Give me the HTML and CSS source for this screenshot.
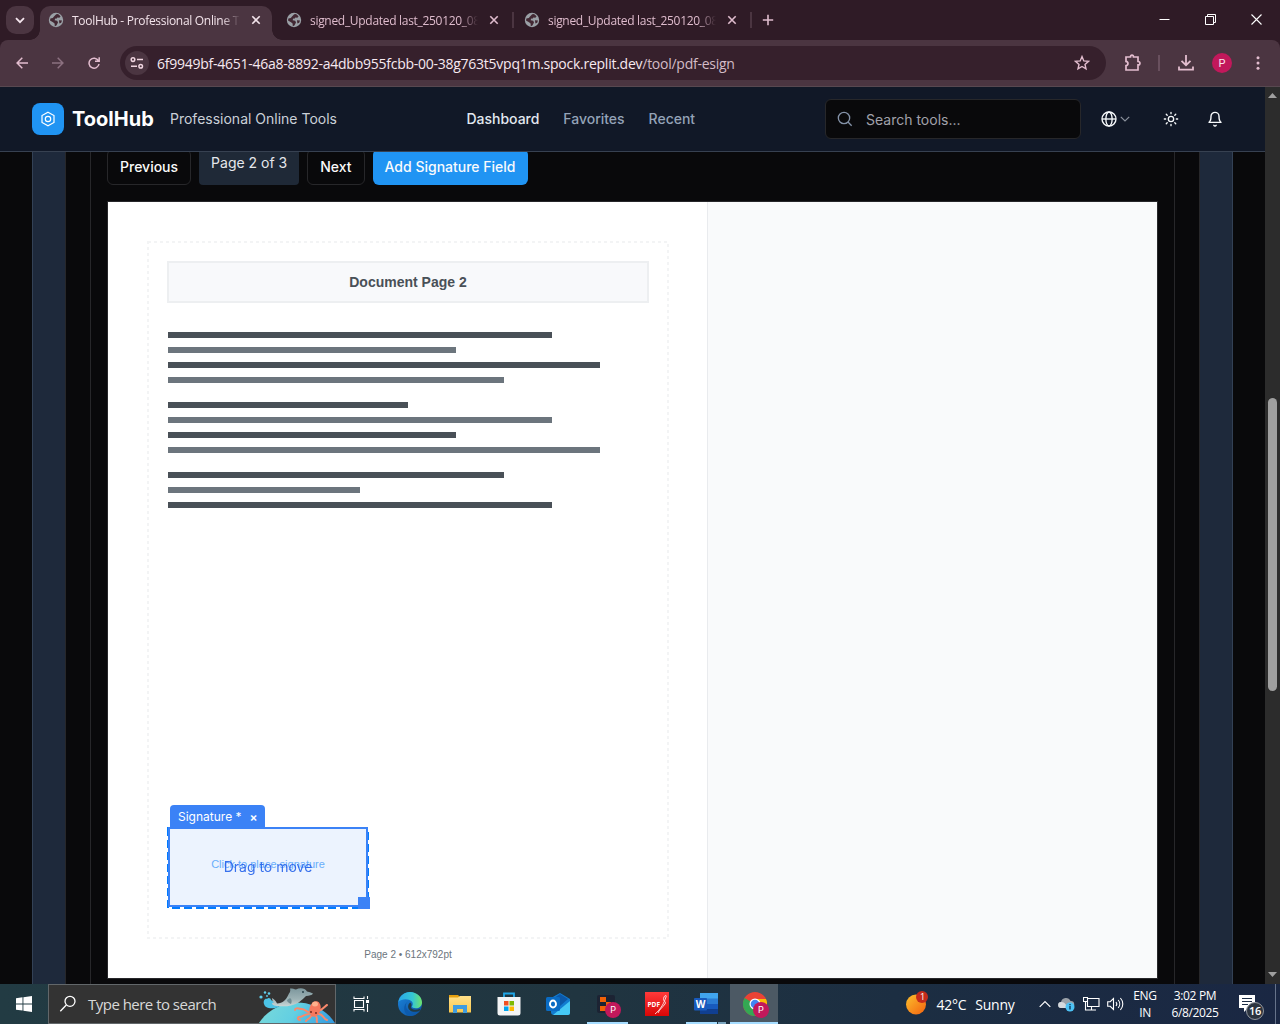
FILE: index.html
```html
<!DOCTYPE html>
<html lang="en">
<head>
<meta charset="utf-8">
<title>ToolHub - Professional Online Tools</title>
<link rel="stylesheet" href="styles.css">
</head>
<body>
<svg width="0" height="0" class="defs">
  <defs>
    <symbol id="globe" viewBox="0 0 16 16"><circle cx="8" cy="8" r="7.2" fill="#9aa0a6"/><path d="M8.2 2.2 10 2l2.6 2.2-1.2 1.6-2-.2-1 1.2-1.2-.4-.6 1.8 2.6.6.8 1.6-1.6 3.2-1.6.6-.2-2.6-1.6-1.4L2 8.600l.4-2 2.400-.6L6 4.400z" fill="#422833"/><path d="M11 8.200l3 .2-.8 2.400-1.800.8z" fill="#422833"/></symbol>
    <symbol id="x" viewBox="0 0 10 10"><path d="M1.300 1.300l7.400 7.400M8.700 1.300L1.300 8.700" stroke="currentColor" stroke-width="1.600"/></symbol>
    <linearGradient id="sea" x1="0" x2="1" y1="0" y2=".6"><stop offset="0" stop-color="#7fdcd8"/><stop offset=".4" stop-color="#62cfe2"/><stop offset="1" stop-color="#1478e0"/></linearGradient>
    <linearGradient id="skin" x1="0" x2="0" y1="0" y2="1"><stop offset="0" stop-color="#7d979d"/><stop offset=".6" stop-color="#9db2b5"/><stop offset="1" stop-color="#c9d6d6"/></linearGradient>
    <linearGradient id="edgeA" x1="0" x2="1"><stop offset="0" stop-color="#2aa6e8"/><stop offset=".6" stop-color="#35c6d4"/><stop offset="1" stop-color="#6fe36a"/></linearGradient>
    <linearGradient id="edgeB" x1="0" x2="1" y1="0" y2="1"><stop offset="0" stop-color="#1b86dc"/><stop offset="1" stop-color="#0c4fa0"/></linearGradient>
    <linearGradient id="sun" x1="0" x2="1" y1="0" y2="1"><stop offset="0" stop-color="#fbc02d"/><stop offset="1" stop-color="#f4620f"/></linearGradient>
    <linearGradient id="folder" x1="0" x2="0" y1="0" y2="1"><stop offset="0" stop-color="#ffe08a"/><stop offset="1" stop-color="#fbc94d"/></linearGradient>
    <linearGradient id="red" x1="0" x2="0" y1="0" y2="1"><stop offset="0" stop-color="#ff3a3a"/><stop offset="1" stop-color="#d80606"/></linearGradient>
  </defs>
</svg>
<div class="screen">
  <div class="tabstrip">
    <button class="tab-search"><svg width="10" height="7" viewBox="0 0 10 7"><path d="M1 1.200l4 4 4-4" fill="none" stroke="currentColor" stroke-width="1.800"/></svg></button>
    <div class="tab active"><svg class="fav"><use href="#globe"/></svg><span class="title">ToolHub - Professional Online Tools</span><svg class="close"><use href="#x"/></svg></div>
    <div class="tab second"><svg class="fav"><use href="#globe"/></svg><span class="title">signed_Updated last_250120_08</span><svg class="close"><use href="#x"/></svg></div>
    <div class="tab third"><svg class="fav"><use href="#globe"/></svg><span class="title">signed_Updated last_250120_08</span><svg class="close"><use href="#x"/></svg></div>
    <svg class="newtab" width="12" height="12" viewBox="0 0 12 12"><path d="M6 .8v10.400M.8 6h10.400" stroke="currentColor" stroke-width="1.600"/></svg>
    <div class="window-buttons">
      <svg width="11" height="11" viewBox="0 0 11 11"><path d="M.5 5.500h10" stroke="#fff"/></svg>
      <svg width="11" height="11" viewBox="0 0 11 11"><path d="M.5 2.500h8v8h-8zM2.500 2.500v-2h8v8h-2" fill="none" stroke="#fff"/></svg>
      <svg width="11" height="11" viewBox="0 0 11 11"><path d="M.5.5l10 10M10.500.5l-10 10" stroke="#fff" stroke-width="1.100"/></svg>
    </div>
  </div>
  <div class="toolbar">
    <div class="history">
      <svg width="12" height="12" viewBox="0 0 12 12"><path d="M12 6H1.500M6.300.8L1.100 6l5.200 5.200" fill="none" stroke="#e3bdcf" stroke-width="1.500"/></svg>
      <svg width="12" height="12" viewBox="0 0 12 12"><path d="M0 6h10.500M5.700.8L10.900 6l-5.200 5.200" fill="none" stroke="#8c7180" stroke-width="1.500"/></svg>
      <svg width="12" height="12" viewBox="0 0 12 12"><path d="M10.400 3.700A5 5 0 1 0 11 7M11.200.3v4H7" fill="none" stroke="#e3bdcf" stroke-width="1.500"/></svg>
    </div>
    <div class="omnibox">
      <span class="site"><svg width="14" height="12" viewBox="0 0 14 12"><g fill="none" stroke="#f0d5e0" stroke-width="1.500"><circle cx="3" cy="2.600" r="1.800"/><path d="M7 2.600h6M1 9.200h6"/><circle cx="10.700" cy="9.200" r="1.800"/></g></svg></span>
      <span class="url">6f9949bf-4651-46a8-8892-a4dbb955fcbb-00-38g763t5vpq1m.spock.replit.dev<i>/tool/pdf-esign</i></span>
      <svg class="star" width="16" height="16" viewBox="0 0 16 16"><path d="M8 1.600l1.800 4.300 4.700.4L11 9.400l1 4.500-4-2.400-4 2.400 1-4.500L1.500 6.300l4.700-.4z" fill="none" stroke="#e3bdcf" stroke-width="1.400"/></svg>
    </div>
    <svg class="puzzle" width="18" height="18" viewBox="0 0 18 18"><path d="M2 3h4.500c0-2.400 3-2.400 3 0H14v4.500c2.600 0 2.600 3.400 0 3.400V16H2v-4.300c2.600-.3 2.600-4 0-4.300z" fill="none" stroke="#e3bdcf" stroke-width="1.700"/></svg>
    <span class="bar-sep"></span>
    <svg class="download" width="16" height="16" viewBox="0 0 16 16"><path d="M8 0v9.500M3.500 5.800L8 10.200l4.500-4.400M1 11.500v3.200h14v-3.200" fill="none" stroke="#e3bdcf" stroke-width="1.800"/></svg>
    <span class="avatar">P</span>
    <svg class="dots" width="4" height="14" viewBox="0 0 4 14" fill="#e3bdcf"><circle cx="2" cy="1.700" r="1.500"/><circle cx="2" cy="7" r="1.500"/><circle cx="2" cy="12.300" r="1.500"/></svg>
  </div>

  <div class="viewport">
    <div class="page">
      <header class="header">
        <span class="logo"><svg width="16" height="16" viewBox="0 0 16 16" fill="none" stroke="#fff" stroke-width="1.200"><path d="M8 1.200l6 3.400v6.800l-6 3.400-6-3.400V4.600z"/><circle cx="8" cy="8" r="2.700"/></svg></span>
        <span class="brand">ToolHub</span>
        <span class="tagline">Professional Online Tools</span>
        <nav class="nav"><a class="current">Dashboard</a><a>Favorites</a><a>Recent</a></nav>
        <div class="search"><svg width="16" height="16" viewBox="0 0 24 24" fill="none" stroke="#8492a8" stroke-width="2"><circle cx="10.500" cy="10.500" r="8.500"/><path d="M22 22l-5.500-5.500"/></svg><span>Search tools...</span></div>
        <div class="lang"><svg width="16" height="16" viewBox="0 0 24 24" fill="none" stroke="#f8fafc" stroke-width="2"><circle cx="12" cy="12" r="10.500"/><ellipse cx="12" cy="12" rx="4.700" ry="10.500"/><path d="M1.500 12h21"/></svg><svg width="12" height="12" viewBox="0 0 12 12"><path d="M1.800 3.800L6 8l4.200-4.200" fill="none" stroke="#8b919c" stroke-width="1.200"/></svg></div>
        <svg class="theme" width="16" height="16" viewBox="0 0 24 24" fill="none" stroke="#f8fafc" stroke-width="2" stroke-linecap="round"><circle cx="12" cy="12" r="4"/><path d="M12 2v2M12 20v2M4.900 4.900l1.400 1.400M17.700 17.700l1.400 1.400M2 12h2M20 12h2M6.300 17.700l-1.400 1.400M19.100 4.900l-1.400 1.400"/></svg>
        <svg class="bell" width="16" height="16" viewBox="0 0 24 24" fill="none" stroke="#f8fafc" stroke-width="2.100" stroke-linecap="round" stroke-linejoin="round"><path d="M6 8a6 6 0 0 1 12 0c0 7 3 9 3 9H3s3-2 3-9M10.300 21.500a2 2 0 0 0 3.400 0"/></svg>
      </header>
      <main class="content">
        <div class="outer"><div class="card"><div class="panel">
          <div class="controls"><button class="btn">Previous</button><span class="count">Page 2 of 3</span><button class="btn">Next</button><button class="btn primary">Add Signature Field</button></div>
          <div class="viewer">
            <div class="sheet">
              <svg class="frame" width="600" height="776"><rect x="40" y="40" width="520" height="696" fill="none" stroke="#f3f4f5" stroke-width="2" stroke-dasharray="3 3"/><rect x="60" y="626" width="200" height="80" fill="none" stroke="#007bff" stroke-width="2" stroke-dasharray="8 4"/></svg>
              <div class="sheet-title">Document Page 2</div>
              <div class="lines"><b class="w80"></b><b class="w60"></b><b class="w90"></b><b class="w70"></b></div>
              <div class="lines"><b class="w50"></b><b class="w80"></b><b class="w60"></b><b class="w90"></b></div>
              <div class="lines"><b class="w70"></b><b class="w40"></b><b class="w80"></b></div>
              <div class="sheet-foot">Page 2 • 612x792pt</div>
              <div class="field">
                <div class="hint">Click to place signature</div>
                <div class="drag">Drag to move</div>
                <div class="tag">Signature * <span>×</span></div>
                <div class="handle"></div>
              </div>
            </div>
          </div>
        </div></div></div>
      </main>
    </div>
    <div class="scrollbar">
      <svg width="9" height="5" viewBox="0 0 9 5"><path d="M0 5L4.500 0 9 5z" fill="#9f9f9f"/></svg>
      <span class="thumb"></span>
      <svg width="9" height="5" viewBox="0 0 9 5"><path d="M0 0l4.500 5L9 0z" fill="#9f9f9f"/></svg>
    </div>
  </div>

  <div class="taskbar">
    <div class="start"><svg width="16" height="16" viewBox="0 0 16 16" fill="#fff"><path d="M0 2.200L6.500 1.300v6.200H0zM7.400 1.200L16 0v7.500H7.400zM0 8.400h6.500v6.200L0 13.700zM7.400 8.400H16V16l-8.600-1.200z"/></svg></div>
    <div class="find">
      <svg class="lens" width="18" height="18" viewBox="0 0 18 18" fill="none" stroke="#fff" stroke-width="1.300"><circle cx="11" cy="6.300" r="5"/><path d="M7.300 10L1.300 16.300"/></svg>
      <span>Type here to search</span>
      <svg class="art" width="80" height="38" viewBox="0 0 80 38">
        <circle cx="42" cy="63" r="45.500" fill="url(#sea)"/>
        <path d="M20 23c-5 1-10 0-11-4-1-3 1-6 3-5 1-2 4-1 4 1l5 3 3 4z" fill="#4cc3e6"/><circle cx="6" cy="12" r="1.600" fill="#5fd0ee"/><circle cx="10" cy="7.500" r="1.200" fill="#5fd0ee"/><circle cx="14" cy="8.500" r="1.300" fill="#5fd0ee"/><circle cx="12" cy="11" r=".9" fill="#5fd0ee"/>
        <path d="M17 13c2 1 4 3 5 5.500 6 0 9-4 11-8 1-2.500 3-3.500 2-7 3 0 4 .5 6 1 4-2 9-1.500 11 2 2 .2 4 1 6 2-1 2-4 2-7 2.500-4 4-8 8-15 9.500-4 1-9 1-14 .5-2 0-4-1-5-2 0-2 2-1 2-1-1-1-2-3-2-5z" fill="url(#skin)"/><path d="M35 13c2 1 2 4 1 6-3-1-4-3-4-4z" fill="#6f8b92"/><circle cx="48" cy="7" r=".9" fill="#203a44"/>
        <g fill="none" stroke="#f9896c" stroke-width="2" stroke-linecap="round"><path d="M54 27c-4 0-4-4-8-3-4-1-6-1-6 1M54 29c-5 0-6 3-10 3-2 1-1 3 1 3M56 31c-1 3-4 3-5 5M61 31c2 3 0 4 1 6M63 29c5-1 5 5 9 6M63 26c5-1 7-5 9-6"/></g><ellipse cx="60" cy="24" rx="5.500" ry="8" fill="#f6795e" transform="rotate(15 60 24)"/><ellipse cx="60" cy="19" rx="3" ry="2.500" fill="#ffb08c"/><circle cx="56" cy="27" r=".9" fill="#6b241c"/><circle cx="61" cy="28" r=".9" fill="#6b241c"/>
      </svg>
    </div>
    <div class="app"><svg width="17" height="16" viewBox="0 0 17 16" fill="none" stroke="#fff" stroke-width="1.100"><path d="M1.500 4.500h9v7h-9zM1 .5V2.500h10V.5M1 15.500v-2h10v2M14.500 0v3M14.500 8v8"/><path d="M13.500 4.500h2v2h-2z" fill="#fff"/></svg></div>
    <div class="app"><svg width="24" height="24" viewBox="0 0 24 24"><circle cx="12" cy="12" r="12" fill="url(#edgeB)"/><path d="M.3 10C1.500 3.800 6.500 0 12 0c7 0 12 5.200 12 10.300 0 4-3 6-6 6-2.700 0-4.300-1-4-2 .9-1.100 1.300-3.300-.4-5C11 6.500 3.500 6.200.3 10z" fill="url(#edgeA)"/><path d="M10 9.200c-4 3-2 9.500 3.500 11 3 .8 6-.1 8.300-1.700C19 22.500 15 24 11.500 24 5.500 22 4 13 10 9.200z" fill="#0d5bad"/><path d="M13 14.500c-.8 2.500 4 4.500 9.300 2.200l-.5 1.700c-5 3.400-13 .6-11.500-5.200.3-1.200 1-2.200 2-2.800 1.200 1.200 1.700 2.900.7 4.100z" fill="#203b46"/></svg></div>
    <div class="app"><svg width="24" height="24" viewBox="0 0 24 24"><path d="M1 3h9l2 2v4H1z" fill="#e5a010"/><path d="M1 5.500h9L12 4h11v16.500H1z" fill="url(#folder)"/><path d="M5 13h14v8h-4v-4H9v4H5z" fill="#3f9ce0"/></svg></div>
    <div class="app"><svg width="24" height="24" viewBox="0 0 24 24"><path d="M7 6V1.500h10V6" fill="none" stroke="#20a7e8" stroke-width="1.800"/><path d="M.5 5h23v16a2.500 2.500 0 0 1-2.500 2.500H3A2.500 2.500 0 0 1 .5 21z" fill="#f3f4f5"/><path d="M7 9h4.500v4.500H7z" fill="#f25022"/><path d="M12.500 9H17v4.500h-4.500z" fill="#7fba00"/><path d="M7 14.500h4.500V19H7z" fill="#00a4ef"/><path d="M12.500 14.500H17V19h-4.500z" fill="#ffb900"/></svg></div>
    <div class="app"><svg width="24" height="24" viewBox="0 0 24 24"><path d="M5 6l9-5 10 6v13a3 3 0 0 1-3 3H8a3 3 0 0 1-3-3z" fill="#127bd0"/><path d="M8 6l6-4 8 5-8 7z" fill="#0c58a8"/><path d="M24 9v12a2 2 0 0 1-2 2H7z" fill="#45c8f5"/><rect y="5" width="14" height="14" rx="1.500" fill="#0a6cc4"/><ellipse cx="7" cy="12" rx="3" ry="3.500" fill="none" stroke="#fff" stroke-width="1.900"/></svg></div>
    <div class="app open"><svg width="24" height="24" viewBox="0 0 24 24"><rect x="1" y="3" width="18" height="18" rx="2" fill="#1c2333"/><path d="M4 5h6v5H4zM10 10h5v5h-5zM4 14h6v5H4z" fill="#f26207"/></svg><em>P</em></div>
    <div class="app"><svg width="24" height="24" viewBox="0 0 24 24"><path d="M0 0h24v24H0z" fill="url(#red)"/><text x="2.500" y="14.500" class="pdf">PDF</text><path d="M10 22c6-5 9-11 11-17 1-2-1-2-2 0-2 5 3 4 1 7-3 4-6 6-7 9" fill="none" stroke="#fff" stroke-width=".8"/></svg></div>
    <div class="app open multi"><svg width="24" height="24" viewBox="0 0 24 24"><path d="M6 1h18v6H6z" fill="#41a5ee"/><path d="M6 6.500h18V12H6z" fill="#2b7cd3"/><path d="M6 12h18v5.500H6z" fill="#185abd"/><path d="M6 17h18v5H6z" fill="#103f91"/><rect y="6" width="13" height="12.500" rx="1" fill="#185abd"/><text x="6.500" y="16" class="word">W</text></svg></div>
    <div class="app active open"><svg width="24" height="24" viewBox="0 0 24 24"><circle cx="12" cy="12" r="12" fill="#ea4335"/><path d="M12 12L1.600 6A12 12 0 0 0 12 24l5-9z" fill="#34a853"/><path d="M12 7h11a12 12 0 0 1-11 17l4.500-9z" fill="#fbbc04"/><circle cx="12" cy="12" r="5.500" fill="#fff"/><circle cx="12" cy="12" r="4.300" fill="#4285f4"/></svg><em>P</em></div>
    <div class="weather"><span class="sun"><svg width="22" height="22" viewBox="0 0 22 22"><circle cx="10" cy="11.500" r="10" fill="url(#sun)"/></svg><i>1</i></span><span class="temp">42°C</span><span>Sunny</span></div>
    <div class="tray">
      <svg width="12" height="8" viewBox="0 0 12 8"><path d="M.7 6.800L6 1.500l5.300 5.300" fill="none" stroke="#fff" stroke-width="1.200"/></svg>
      <svg class="cloud" width="17" height="15" viewBox="0 0 17 15"><path d="M3 11a3 3 0 0 1 0-6 5 5 0 0 1 9.500-1A3.500 3.500 0 0 1 13 11z" fill="#9aa1a8"/><path d="M3 11a3 3 0 0 1 .5-6c3 0 5 3 6 6z" fill="#d5dade"/><circle cx="12" cy="10" r="4.500" fill="#4cc2f5"/><path d="M12 9v3.500M12 7v1.300" stroke="#123a5c" stroke-width="1.400"/></svg>
      <svg class="net" width="17" height="14" viewBox="0 0 17 14" fill="none" stroke="#fff" stroke-width="1.100"><path d="M5 1.500h11v8H4.500V5M8.500 9.500v3M5 13h8M.5.5h4v4h-4zM2.500 4.500v8.500H5"/></svg>
      <svg class="vol" width="17" height="14" viewBox="0 0 17 14" fill="none" stroke="#fff" stroke-width="1.100"><path d="M.7 4.700h2.500L6.500 1.500v11L3.200 9.300H.7zM9 5c1 1.200 1 2.800 0 4M11.200 3c2 2.300 2 5.700 0 8M13.400 1c3.200 3.500 3.200 8.500 0 12"/></svg>
    </div>
    <div class="ime">ENG<br>IN</div>
    <div class="clock">3:02 PM<br>6/8/2025</div>
    <div class="notes"><svg width="16" height="17" viewBox="0 0 16 17"><path d="M0 0h16v13H9l-4 4v-4H0z" fill="#fff"/><path d="M3 3.500h10M3 6.500h10M3 9.500h6" stroke="#1c2c44"/></svg><i>16</i></div>
    <div class="peek"></div>
  </div>
</div>
</body>
</html>
```
FILE: styles.css
```css
* { box-sizing: border-box; }
body { margin: 0; background: #2f1b26; font-family: Inter, sans-serif; }
svg { display: block; flex: none; }
button { font: inherit; margin: 0; }
i, em { font-style: normal; }
.defs { position: absolute; }
.screen { width: 1280px; height: 1024px; display: flex; flex-direction: column; overflow: hidden; }

/* browser tabs */
.tabstrip { height: 40px; flex: none; background: #2f1b26; display: flex; align-items: flex-start; padding: 6px 18px 0 6px; color: #dfbccd; font: 12px "Open Sans", "Noto Sans", sans-serif; position: relative; z-index: 1; }
.tab-search { width: 28px; height: 28px; border: 0; border-radius: 10px; background: #4b3541; color: #f5e6ee; display: grid; place-items: center; padding: 0; }
.tab { display: flex; align-items: center; height: 28px; position: relative; }
.tab .fav { width: 16px; height: 16px; margin-right: 8px; }
.tab .title { width: 168px; overflow: hidden; white-space: nowrap; letter-spacing: -0.3px; -webkit-mask-image: linear-gradient(90deg, #000 150px, transparent 168px); }
.tab .close { width: 10px; height: 10px; margin-left: 11px; }
.tab.active { width: 232px; height: 34px; margin-left: 6px; padding: 0 0 6px 8px; background: #4b3541; border-radius: 10px 10px 0 0; color: #f2e3ea; }
.tab.active::before, .tab.active::after { content: ""; position: absolute; bottom: 0; width: 10px; height: 10px; }
.tab.active::before { left: -10px; background: radial-gradient(circle at 0 0, transparent 9.5px, #4b3541 10px); }
.tab.active::after { right: -10px; background: radial-gradient(circle at 100% 0, transparent 9.5px, #4b3541 10px); }
.tab.second, .tab.third { width: 238px; padding-left: 10px; }
.tab.second { margin-left: 4px; }
.tab.second::after, .tab.third::after { content: ""; width: 2px; height: 16px; background: #4b3541; position: absolute; right: 0; top: 6px; }
.newtab { margin: 8px 0 0 10px; }
.window-buttons { display: flex; gap: 35px; margin: 8px 0 0 auto; }

/* address bar */
.toolbar { height: 47px; flex: none; background: #4b3541; border-bottom: 1px solid #584850; border-radius: 8px 8px 0 0; display: flex; align-items: center; }
.history { display: flex; align-items: center; gap: 24px; padding-left: 16px; width: 120px; }
.omnibox { width: 986px; height: 34px; border-radius: 17px; background: #36202c; display: flex; align-items: center; padding: 0 16px 0 5px; }
.site { width: 24px; height: 24px; border-radius: 50%; background: #4b3541; display: grid; place-items: center; }
.url { flex: 1; margin-left: 8px; font: 14px "Open Sans", "Noto Sans", sans-serif; color: #f7e9f0; white-space: nowrap; letter-spacing: -0.254px; }
.url i { color: #d3bcc7; }
.puzzle { margin-left: 18px; }
.bar-sep { width: 2px; height: 16px; background: #69505e; margin-left: 16px; }
.download { margin-left: 18px; }
.avatar { width: 20px; height: 20px; border-radius: 50%; background: #c2185b; color: #fbe4ee; display: grid; place-items: center; margin-left: 18px; font: 11px Roboto, sans-serif; }
.dots { margin-left: 24px; }

/* page */
.viewport { flex: 1; min-height: 0; display: flex; background: #09090b; }
.page { width: 1265px; display: flex; flex-direction: column; overflow: hidden; }
.header { height: 65px; flex: none; background: #111827; border-bottom: 1px solid #374151; display: flex; align-items: center; padding-left: 32px; font-size: 14px; position: relative; z-index: 1; }
.logo { width: 32px; height: 32px; border-radius: 8px; background: #2094f3; display: grid; place-items: center; }
.brand { margin-left: 8px; width: 98px; font-size: 20px; font-weight: 700; color: #fff; }
.tagline { width: 296.500px; color: #cbd0d8; padding-bottom: 2px; }
.nav { display: flex; gap: 24px; width: 358.500px; color: #94a3b8; font-weight: 500; padding-bottom: 2px; letter-spacing: -0.02px; }
.nav .current { color: #e2e8f0; }
.search { width: 256px; height: 40px; border: 1px solid #27272a; border-radius: 6px; background: #09090b; color: #a1a1aa; display: flex; align-items: center; gap: 13px; padding: 0 0 0 11px; }
.search span { padding-top: 1px; }
.search svg { margin-bottom: 1px; }
.lang { display: flex; align-items: center; gap: 2px; margin-left: 20px; width: 62px; }
.theme { margin-right: 28px; }

.content { flex: 1; min-height: 0; overflow: hidden; padding: 0 32px; }
.outer { background: #1e293b; border: solid #334155; border-width: 0 1px; padding: 0 32px; height: 100%; }
.card { background: #09090b; border: solid #27272a; border-width: 0 1px; padding: 0 24px; height: 100%; }
.panel { border: solid #27272a; border-width: 0 1px; padding: 0 16px; height: 100%; display: flow-root; }
.controls { display: flex; gap: 8px; height: 36px; margin: -3px 0 16px; font-size: 14px; font-weight: 500; color: #fafafa; }
.btn { border: 1px solid #27272a; border-radius: 6px; background: #09090b; color: #fafafa; padding: 0 12px 2px; white-space: nowrap; }
.count { background: #1f2937; border-radius: 4px; padding: 4px 12px; line-height: 20px; color: #e5e7eb; font-weight: 400; }
.btn.primary { background: #2094f3; border: 0; color: #f8fafc; width: 155px; padding: 0 0 2px; }
.viewer { border: 1px solid #27272a; background: #f9fafb; height: 778px; }
.sheet { width: 600px; height: 776px; background: #fff; border-right: 1px solid #e9ebee; padding: 59px 0 0 59px; position: relative; font-family: "Liberation Sans", Arial, sans-serif; }
.frame { position: absolute; left: 0; top: 0; }
.sheet-title { width: 482px; height: 42px; border: 2px solid #edeff1; background: #f8f9fb; color: #495057; font-size: 14px; font-weight: 700; text-align: center; line-height: 38px; margin-bottom: 29px; }
.lines { width: 480px; margin: 0 0 19px 1px; display: flex; flex-direction: column; gap: 9px; }
.lines b { height: 6px; background: #495057; }
.lines b:nth-child(even) { background: #6c757d; }
.w40 { width: 40%; } .w50 { width: 50%; } .w60 { width: 60%; } .w70 { width: 70%; } .w80 { width: 80%; } .w90 { width: 90%; }
.sheet-foot { position: absolute; left: 0; width: 600px; top: 747px; text-align: center; font-size: 10px; line-height: 12px; color: #6c757d; }
.field { position: absolute; left: 60px; top: 625px; width: 200px; height: 80px; border: 2px solid #3b82f6; background: #ecf3fe; }
.hint, .drag { position: absolute; left: 0; right: 0; text-align: center; white-space: nowrap; }
.hint { top: 28px; font-size: 11px; line-height: 14px; color: #69aefb; }
.drag { top: 28px; font: 14px/20px Inter, sans-serif; color: #2563eb; opacity: .9; }
.tag { position: absolute; left: 0; top: -24px; height: 22px; width: 95px; border-radius: 4px 4px 0 0; background: #3b82f6; color: #fff; font: 12px/23px Inter, sans-serif; padding-left: 8px; white-space: nowrap; }
.tag span { margin-left: 4.500px; font-weight: 600; }
.handle { position: absolute; right: -4px; bottom: -4px; width: 12px; height: 12px; background: #3b82f6; }

.scrollbar { width: 15px; background: #2c2c2c; display: flex; flex-direction: column; align-items: center; padding: 6px 0 7px; }
.thumb { width: 9px; height: 293px; border-radius: 5px; background: #9f9f9f; margin: 300px 0 auto; }

/* taskbar */
.taskbar { height: 40px; flex: none; display: flex; color: #fff; background: linear-gradient(90deg, #223b43, #203540 45%, #1c2e42 70%, #1a2743); font-family: "Open Sans", "Noto Sans", sans-serif; }
.start { width: 48px; display: grid; place-items: center; }
.find { width: 288px; border: 1px solid #62676a; background: #333; display: flex; align-items: center; font-size: 15px; color: #d8d8d8; padding-left: 10px; }
.find span { margin-left: 11px; letter-spacing: -0.52px; white-space: nowrap; }
.find .art { margin-left: auto; }
.app { width: 49.300px; display: grid; place-items: center; position: relative; }
.app svg { position: relative; left: .5px; }
.app.open::after { content: ""; position: absolute; bottom: 0; left: 4.500px; right: 4px; height: 2px; background: #a5dcff; }
.app.multi::after { background: linear-gradient(90deg, #a5dcff 31px, #1c3442 31px, #1c3442 32px, #7ba5bf 32px); }
.app.active { background: #4c5964; width: 48px; }
.app.active::after { left: 0; right: 0; }
.app em { position: absolute; left: 22.500px; top: 18px; width: 16px; height: 16px; border-radius: 50%; background: #c2185b; font: 9px/16px Roboto, sans-serif; text-align: center; }
.pdf { font: 700 6.500px "Open Sans", sans-serif; fill: #fff; }
.word { font: 700 10px "Open Sans", sans-serif; fill: #fff; text-anchor: middle; }
.weather { display: flex; align-items: center; margin-left: auto; font-size: 14px; letter-spacing: -0.25px; }
.sun { position: relative; width: 30px; }
.sun i { position: absolute; left: 10px; top: -2px; width: 12px; height: 12px; border-radius: 50%; background: #c42b1c; font-size: 9px; line-height: 12px; text-align: center; }
.temp { margin-right: 9px; }
.tray { display: flex; align-items: center; gap: 7.500px; margin-left: 24px; }
.ime, .clock { font-size: 12px; line-height: 17px; text-align: center; padding-top: 3px; letter-spacing: -0.35px; }
.ime { margin-left: 8px; width: 26px; }
.clock { margin-left: 12px; width: 50px; white-space: nowrap; }
.notes { position: relative; width: 55px; padding: 11px 0 0 19px; }
.notes i { position: absolute; left: 26px; top: 18px; width: 18px; height: 18px; border-radius: 50%; border: 1px solid #92979e; background: #2c343f; font-size: 11px; font-weight: 600; line-height: 16px; text-align: center; letter-spacing: -0.3px; }
.peek { width: 5px; border-left: 1px solid #66738a; }
```
